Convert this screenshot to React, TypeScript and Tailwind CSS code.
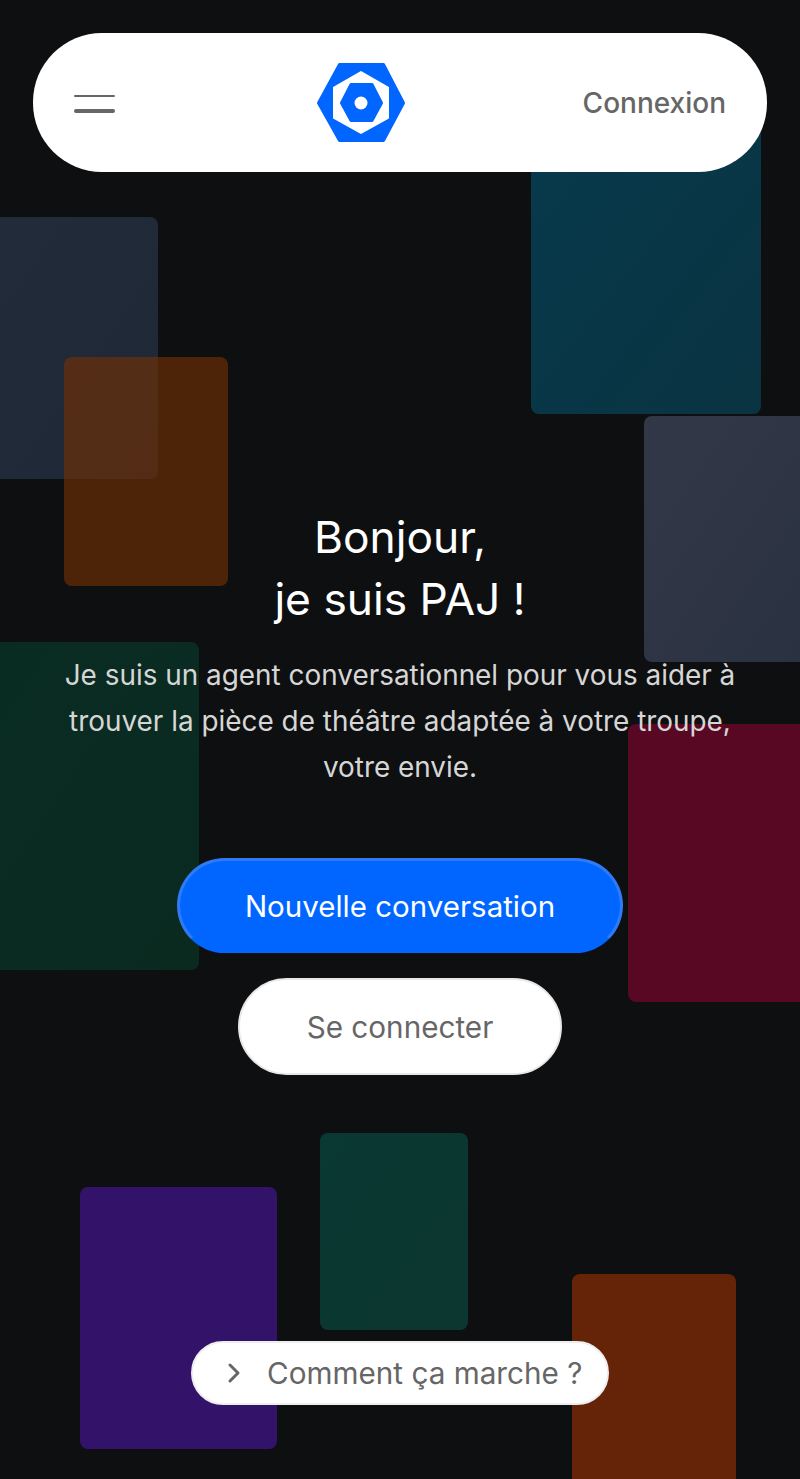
import React from "react";

const blocks = [
  "left-[531px] top-[120px] w-[230px] h-[294px] bg-linear-to-br from-[#063a4c] to-[#0a3341]",
  "left-[644px] top-[416px] w-[170px] h-[246px] bg-linear-to-br from-[#323847] to-[#2a3140]",
  "left-[-20px] top-[217px] w-[178px] h-[262px] bg-linear-to-br from-[#222c3a] to-[#1e2735]",
  "left-[64px] top-[357px] w-[164px] h-[229px] bg-[#722f06]/65",
  "left-[-20px] top-[642px] w-[219px] h-[328px] bg-linear-to-br from-[#092c22] to-[#0a2a20]",
  "left-[628px] top-[724px] w-[190px] h-[278px] bg-[#590824]",
  "left-[320px] top-[1133px] w-[148px] h-[197px] bg-linear-to-br from-[#0a3832] to-[#0c3630]",
  "left-[80px] top-[1187px] w-[197px] h-[262px] bg-[#33136a]",
  "left-[572px] top-[1274px] w-[164px] h-[225px] bg-[#652407]",
];

export default function App() {
  return (
    <div className="relative h-[1479px] w-[800px] overflow-hidden bg-[#0e0f11] font-['Inter',sans-serif]">
      {blocks.map((c, i) => (
        <div key={i} className={"absolute rounded-lg " + c} />
      ))}
      <div className="relative flex flex-col items-center pt-[33px]">
        <header className="flex h-[139px] w-[734px] items-center justify-between rounded-[69px] bg-white pl-[41px] pr-[41px]">
          <button className="flex h-[20px] w-[65px] flex-col justify-between pt-[2px]">
            <span className="block h-[2px] w-[41px] rounded-full bg-[#666666]" />
            <span className="block h-[4px] w-[41px] rounded-full bg-[#666666]" />
          </button>
          <svg width="90" height="80" viewBox="316 63 90 80" aria-label="Logo">
            <path
              fill="#0066ff"
              stroke="#0066ff"
              strokeLinejoin="round"
              strokeWidth="3"
              d="M339.500 64.500H383.500L403.500 103L383.500 140.500H339.500L318.500 103Z"
            />
            <path fill="#ffffff" stroke="#ffffff" strokeLinejoin="round" strokeWidth="2" d="M361 72L388 87.500V118L361 133L334 118V87.500Z" />
            <path
              fill="#0066ff"
              stroke="#0066ff"
              strokeLinejoin="round"
              strokeWidth="3"
              d="M351 84.500H372L381.500 103L372 120.500H351L341.500 103Z"
            />
            <circle cx="361" cy="103" r="6.500" fill="#ffffff" />
          </svg>
          <span className="text-[28px] font-medium leading-[40px] text-[#666666]">Connexion</span>
        </header>

        <h1 className="mt-[334px] text-center text-[44.300px] font-normal leading-[62px] text-white">
          Bonjour,
          <br />
          je suis PAJ !
        </h1>
        <p className="mt-[22px] w-[680px] text-center text-[27.900px] leading-[46px] text-[#d6d6d6]">
          Je suis un agent conversationnel pour vous aider à trouver la pièce de théâtre adaptée à votre troupe, votre envie.
        </p>

        <button className="mt-[68px] flex h-[95px] w-[446px] items-center justify-center rounded-full border-[3px] border-[#2f7bf5] border-b-[#0066ff] bg-[#0066ff] text-[29.500px] leading-[40px] text-white">
          Nouvelle conversation
        </button>
        <button className="mt-[25px] flex h-[97px] w-[324px] items-center justify-center rounded-full border-2 border-[#e8e8e8] bg-white text-[29.700px] leading-[40px] text-[#666666]">
          Se connecter
        </button>
        <button className="mt-[266px] flex h-[64px] w-[418px] items-center rounded-full border-2 border-[#eeeeee] bg-white pl-[33px] text-[29.700px] leading-[40px] text-[#666666]">
          <svg width="16" height="22" viewBox="0 0 16 22" fill="none" stroke="#666666" strokeWidth="3" strokeLinecap="round" strokeLinejoin="round">
            <path d="M4 3L12 11L4 19" />
          </svg>
          <span className="ml-[25px]">Comment ça marche ?</span>
        </button>
      </div>
    </div>
  );
}
